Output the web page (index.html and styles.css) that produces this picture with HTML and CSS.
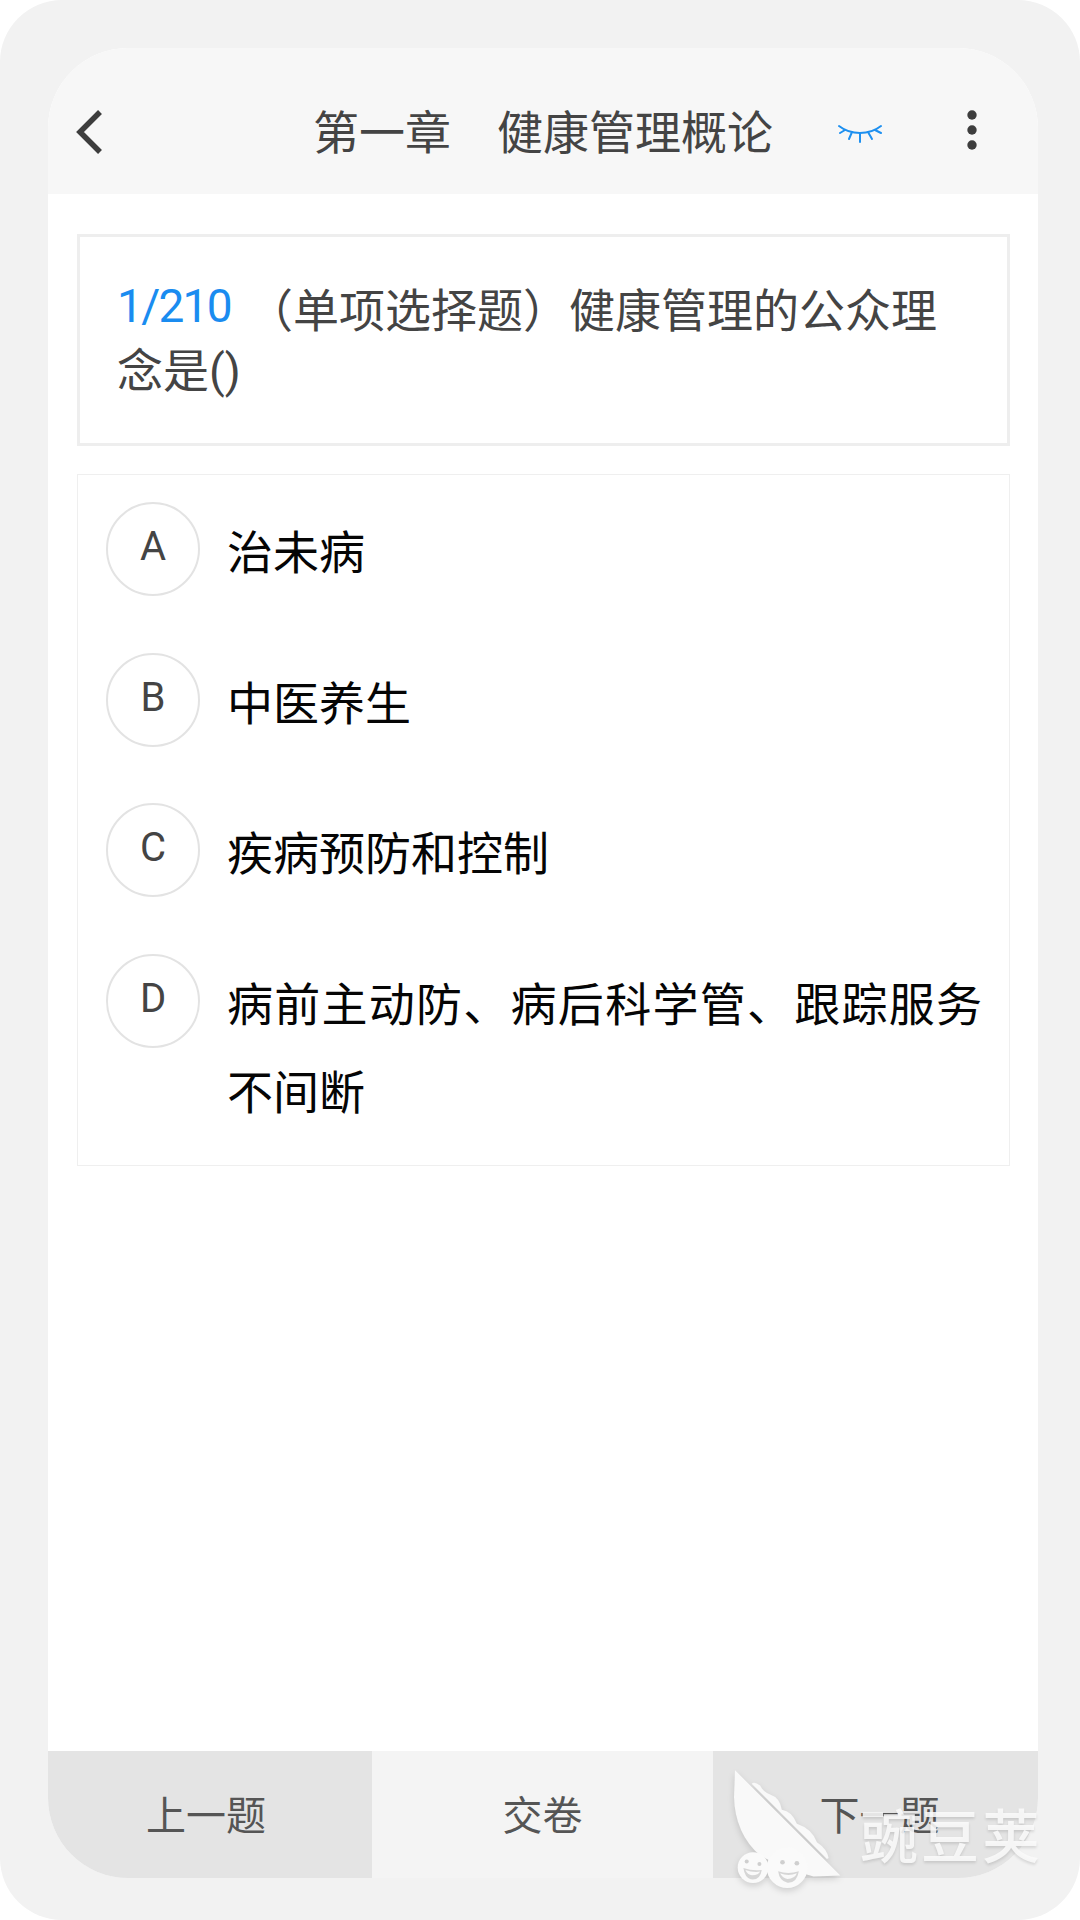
FILE: index.html
```html
<!DOCTYPE html>
<html>
  <head>
    <meta charset="UTF-8" />
    <title>第一章 健康管理概论</title>
    <link rel="stylesheet" href="styles.css">
  </head>

  <body>
    <div class="frame">
      <div class="screen">
        <div class="header">
          <svg class="back" width="34" height="54" viewBox="0 0 34 54">
            <path d="M27 7 L7 27 L27 47" fill="none" stroke="#3d3d3d" stroke-width="5.5" />
          </svg>
          <div class="title">第一章　健康管理概论</div>
          <svg class="eye" width="48" height="26" viewBox="0 0 48 26">
            <g fill="none" stroke="#1e90f0" stroke-width="2" stroke-linecap="round">
              <path d="M3 2 Q12 9 24 9 Q36 9 45 2" />
              <path d="M24 9 V18" />
              <path d="M16 8 L13 15" />
              <path d="M32 8 L36 15" />
              <path d="M9 6 L4 9" />
              <path d="M39 6 L45 9" />
            </g>
          </svg>
          <svg class="more" width="12" height="44" viewBox="0 0 12 44">
            <circle cx="6" cy="7" r="4.7" fill="#3d3d3d" />
            <circle cx="6" cy="22" r="4.7" fill="#3d3d3d" />
            <circle cx="6" cy="37" r="4.7" fill="#3d3d3d" />
          </svg>
        </div>

        <div class="content">
          <div class="question">
            <span class="count">1/210</span>（单项选择题）健康管理的公众理念是()
          </div>

          <div class="options">
            <div class="option">
              <div class="letter">A</div>
              <div class="option-text">治未病</div>
            </div>
            <div class="option">
              <div class="letter">B</div>
              <div class="option-text">中医养生</div>
            </div>
            <div class="option">
              <div class="letter">C</div>
              <div class="option-text">疾病预防和控制</div>
            </div>
            <div class="option">
              <div class="letter">D</div>
              <div class="option-text">病前主动防、病后科学管、跟踪服务不间断</div>
            </div>
          </div>
        </div>

        <div class="footer">
          <div class="foot-btn grey left">上一题</div>
          <div class="foot-btn middle">交卷</div>
          <div class="foot-btn grey right">下一题</div>
        </div>
      </div>

      <!-- watermark sits over the footer -->
      <div class="watermark">
        <svg class="pod" width="117" height="127" viewBox="150 140 350 380">
          <path d="M165 150 L480 465 L400 468 Q300 440 240 405 Q165 340 162 230 Z" fill="#f9f9f9" />
          <path d="M215 190 Q222 182 240 195 Q250 215 270 222 Q300 232 305 268 Q335 272 350 310 Q395 325 410 365 Q440 385 445 412 L440 415 Z" fill="#f9f9f9" />
          <circle cx="219" cy="441" r="46" fill="#fafafa" />
          <circle cx="321" cy="441" r="61" fill="#fafafa" />
          <circle cx="200" cy="423" r="6" fill="#cfcfcf" />
          <circle cx="238" cy="430" r="6" fill="#cfcfcf" />
          <path d="M190 442 Q218 452 245 448 Q240 480 212 476 Q194 470 190 442 Z" fill="#d6d6d6" />
          <path d="M196 448 Q218 456 240 453 Q236 464 216 464 Q202 462 196 448 Z" fill="#fafafa" />
          <circle cx="307" cy="425" r="7" fill="#cfcfcf" />
          <circle cx="350" cy="428" r="7" fill="#cfcfcf" />
          <path d="M294 452 Q324 462 356 452 Q350 488 322 486 Q298 482 294 452 Z" fill="#d6d6d6" />
          <path d="M300 458 Q324 468 350 458 Q344 474 322 475 Q306 472 300 458 Z" fill="#fafafa" />
        </svg>
        <div class="wm-text">豌豆荚</div>
      </div>
    </div>
  </body>
</html>
```

FILE: styles.css
```css
body {
  margin: 0;
  background-color: #ffffff;
  font-family: Roboto, "Noto Sans CJK SC", sans-serif;
}

.frame {
  position: relative;
  width: 1080px;
  height: 1920px;
  box-sizing: border-box;
  padding: 48px 42px 42px 48px;
  background-color: #f2f2f2;
  border-radius: 62px;
  overflow: hidden;
}

.screen {
  display: flex;
  flex-direction: column;
  height: 100%;
  background-color: #ffffff;
  border-radius: 80px;
  overflow: hidden;
}

.header {
  position: relative;
  display: flex;
  align-items: center;
  justify-content: center;
  flex: none;
  box-sizing: border-box;
  height: 146px;
  padding-top: 24px;
  background-color: #f7f7f7;
}

.title {
  font-size: 46px;
  line-height: 60px;
  color: #444444;
}

.back {
  position: absolute;
  left: 25px;
  top: 57px;
}

.eye {
  position: absolute;
  left: 788px;
  top: 76px;
}

.more {
  position: absolute;
  left: 918px;
  top: 60px;
}

.content {
  flex: 1;
  padding: 40px 28px 0 29px;
}

.question {
  padding: 44px 40px 42px 37px;
  border: 3px solid #eeeeee;
  font-size: 46px;
  line-height: 60px;
  color: #444444;
}

.count {
  color: #1a8cf0;
  line-height: 1;
  vertical-align: 5px;
  letter-spacing: -1.7px;
  margin-right: 16px;
}

.options {
  display: flex;
  flex-direction: column;
  gap: 55.5px;
  margin-top: 28px;
  padding: 27px 27px 28px 28px;
  border: 1px solid #efefef;
}

.option {
  display: flex;
  gap: 27px;
}

.letter {
  flex: none;
  width: 90px;
  height: 90px;
  border: 2px solid #e3e3e3;
  border-radius: 50%;
  font-size: 40px;
  line-height: 86px;
  text-align: center;
  color: #444444;
}

.option-text {
  flex: 1;
  margin-top: 7px;
  font-size: 46px;
  line-height: 88px;
  color: #050505;
  text-align: justify;
}

.footer {
  display: flex;
  flex: none;
  height: 127px;
}

.foot-btn {
  display: flex;
  align-items: center;
  justify-content: center;
  box-sizing: border-box;
  padding-bottom: 4px;
  font-size: 40px;
  color: #555555;
  background-color: #f4f4f4;
}

.grey {
  background-color: #e4e4e4;
}

.left {
  width: 324px;
  padding-right: 8px;
}

.middle {
  width: 341px;
}

.right {
  width: 325px;
  padding-left: 8px;
}

.watermark {
  position: absolute;
  left: 730px;
  top: 1767px;
  width: 320px;
  height: 127px;
}

.pod {
  position: absolute;
  left: 0;
  top: 0;
  filter: drop-shadow(0 3px 3px rgba(0, 0, 0, 0.14));
}

.wm-text {
  position: absolute;
  left: 130px;
  top: 36px;
  font-size: 58px;
  line-height: 70px;
  font-weight: 500;
  letter-spacing: 3px;
  color: rgba(250, 250, 250, 0.88);
  text-shadow: 0 2px 3px rgba(0, 0, 0, 0.12);
  white-space: nowrap;
}
```
